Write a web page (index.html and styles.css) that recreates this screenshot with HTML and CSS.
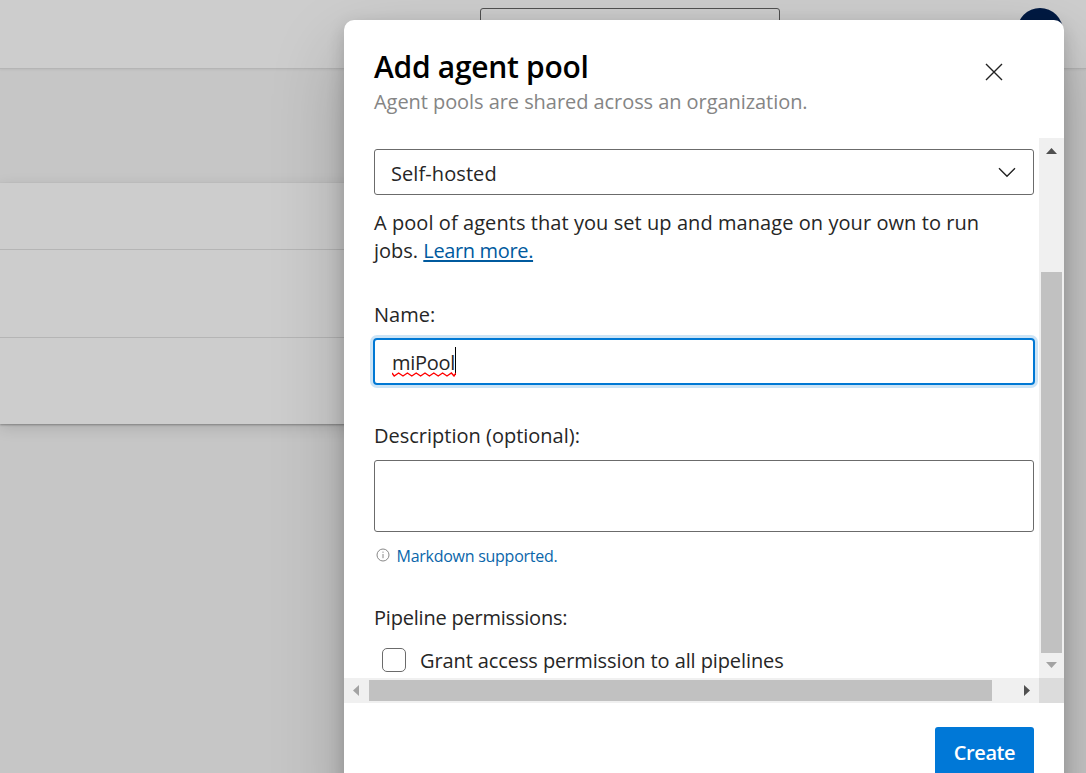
FILE: index.html
```html
<!DOCTYPE html>
<html lang="en">
<head>
<meta charset="utf-8">
<title>Add agent pool</title>
<link rel="stylesheet" href="styles.css">
</head>
<body>
<div class="page">
  <header class="topbar"><div class="search"></div><div class="avatar"></div></header>
  <div class="band"></div>
  <main class="card">
    <div class="row row-first"></div>
    <div class="row row-second"></div>
    <div class="row row-last"></div>
  </main>
</div>
<section class="dialog" role="dialog" aria-labelledby="title">
  <header class="dialog-head">
    <div>
      <h1 class="title" id="title">Add agent pool</h1>
      <p class="subtitle">Agent pools are shared across an organization.</p>
    </div>
    <svg class="close" width="18" height="18" viewBox="0 0 18 18"><path d="M1 1 17 17M17 1 1 17"/></svg>
  </header>
  <div class="scroller">
    <div class="viewport">
      <div class="select"><span class="select-text">Self-hosted</span>
        <svg class="chevron" width="18" height="11" viewBox="0 0 18 11"><path d="M1 1.3 9 9.3 17 1.3"/></svg>
      </div>
      <p class="help"><span class="help-first">A pool of agents that you set up and manage on your own to run</span><br><span class="help-jobs">jobs. </span><a class="link">Learn more.</a></p>
      <div class="label name-label">Name:</div>
      <div class="input"><span class="value">miPool<svg class="squiggle" width="64" height="5" viewBox="0 0 64 5"><path d="M0 1 2.2 4 6.6 1 11 4 15.4 1 19.8 4 24.2 1 28.6 4 33 1 37.4 4 41.8 1 46.2 4 50.6 1 55 4 59.4 1 62 4 64 1"/></svg></span><span class="caret"></span></div>
      <div class="label desc-label">Description (optional):</div>
      <div class="textarea"></div>
      <div class="hint">
        <svg class="info" width="14" height="14" viewBox="0 0 14 14"><circle cx="7" cy="7" r="6"/><path d="M7 6v4.2M7 3.6v1.2"/></svg>
        <span class="hint-text">Markdown supported.</span>
      </div>
      <div class="label perm-label">Pipeline permissions:</div>
      <div class="check"><span class="box"></span><span class="check-text">Grant access permission to all pipelines</span></div>
    </div>
    <div class="vbar">
      <svg class="arrow" width="25" height="25" viewBox="0 0 25 25"><path class="on" d="M7 16 12.5 10 18 16z"/></svg>
      <div class="vtrack"><div class="vthumb"></div></div>
      <svg class="arrow" width="25" height="25" viewBox="0 0 25 25"><path class="off" d="M7 9H18L12.5 15z"/></svg>
    </div>
    <div class="hbar">
      <svg class="arrow" width="25" height="25" viewBox="0 0 25 25"><path class="off" d="M15 7V18L9 12.5z"/></svg>
      <div class="htrack"><div class="hthumb"></div></div>
      <svg class="arrow" width="25" height="25" viewBox="0 0 25 25"><path class="on" d="M10 7V18L16 12.5z"/></svg>
    </div>
    <div class="corner"></div>
  </div>
  <footer class="dialog-foot"><div class="button"><span class="button-text">Create</span></div></footer>
</section>
</body>
</html>
```
FILE: styles.css
```css
* { box-sizing: border-box; }
body { margin: 0; width: 1086px; height: 773px; overflow: hidden; background: #c6c6c6; color: #262626; font: 20px/28px "Open Sans", "Noto Sans", sans-serif; }
h1, p { margin: 0; }
svg { display: block; flex: none; }
.page { height: 773px; overflow: hidden; }
.topbar { height: 69px; background: #cdcdcd; border-bottom: 1px solid #b5b5b5; box-shadow: 0 1px 2px rgba(0,0,0,.06); display: flex; align-items: flex-start; padding: 8px 23px 0 480px; justify-content: space-between; }
.search { width: 300px; height: 40px; border: 1px solid #505050; border-radius: 3px; }
.avatar { width: 46px; height: 46px; border-radius: 50%; background: #001a43; }
.band { height: 114px; }
.card { width: 1030px; background: #cdcdcd; box-shadow: 0 1px 2px rgba(0,0,0,.3), 0 4px 14px rgba(0,0,0,.13); }
.row { border-bottom: 1px solid #b5b5b5; }
.row-first { height: 67px; }
.row-second { height: 88px; }
.row-last { height: 86px; border: 0; }
.dialog { position: absolute; left: 344px; top: 20px; width: 720px; height: 790px; background: #fff; border-radius: 10px; overflow: hidden; box-shadow: 0 32px 72px rgba(0,0,0,.22), 0 6px 18px rgba(0,0,0,.18); }
.dialog-head { height: 118px; padding: 28px 61px 0 30px; display: flex; justify-content: space-between; }
.title { font-size: 30px; line-height: 38px; font-weight: 600; letter-spacing: -.3px; color: #000; white-space: nowrap; }
.subtitle { color: #858585; line-height: 28px; padding-top: 2px; white-space: nowrap; letter-spacing: -.06px; }
.close { margin-top: 15px; fill: none; stroke: #222; stroke-width: 1.4; }
.scroller { height: 565px; display: grid; grid-template: 540px 25px / 695px 25px; }
.viewport { padding: 11px 4px 0 30px; overflow: hidden; white-space: nowrap; }
.select { width: 660px; height: 46px; border: 1px solid #6b6b6b; border-radius: 3px; padding: 3px 17px 0 16px; display: flex; align-items: center; justify-content: space-between; }
.select-text { letter-spacing: .08px; }
.chevron { margin-top: -3px; fill: none; stroke: #222; stroke-width: 1.4; }
.help { margin-top: 14px; }
.help-first { letter-spacing: .065px; }
.link { color: #005a9e; letter-spacing: -.35px; text-decoration: underline; text-decoration-thickness: 2px; text-underline-offset: 2px; }
.name-label { margin-top: 36px; }
.input { width: 662px; height: 47px; margin: 9px 0 0 -1px; border: 2px solid #0078d4; border-radius: 4px; box-shadow: 0 0 0 3px #cce4f6; padding: 3px 0 0 17px; display: flex; align-items: center; }
.value { position: relative; letter-spacing: -.3px; }
.squiggle { position: absolute; left: 0; bottom: 0; fill: none; stroke: #f00; stroke-width: 1.4; }
.caret { width: 1px; height: 28px; background: #000; margin-top: -4px; }
.desc-label { margin-top: 37px; }
.textarea { width: 660px; height: 72px; margin-top: 10px; border: 1px solid #6b6b6b; border-radius: 3px; }
.hint { display: flex; align-items: center; gap: 7px; padding-left: 1.5px; height: 28px; margin-top: 10px; font-size: 16px; letter-spacing: -.26px; color: #0a66aa; }
.info { margin-top: -3px; fill: none; stroke: #888; stroke-width: 1; }
.perm-label { margin-top: 34px; letter-spacing: -.21px; }
.check { display: flex; align-items: center; gap: 14px; padding-left: 8px; height: 30px; margin-top: 13px; }
.check-text { padding-top: 2px; letter-spacing: -.1px; }
.box { width: 24px; height: 24px; border: 1px solid #6b6b6b; border-radius: 5px; }
.vbar { background: #f0f0f0; display: flex; flex-direction: column; }
.vtrack { flex: 1; padding: 109px 2px 0; }
.vthumb { height: 381px; background: #c1c1c1; }
.hbar { background: #f0f0f0; display: flex; }
.htrack { flex: 1; padding: 2px 0; }
.hthumb { width: 623px; height: 21px; background: #c1c1c1; }
.corner { background: #dcdcdc; }
.on { fill: #505050; }
.off { fill: #a3a3a3; }
.dialog-foot { display: flex; justify-content: flex-end; padding: 24px 30px 0 0; }
.button { width: 99px; height: 50px; border-radius: 3px; background: #0078d7; color: #fff; font-weight: 600; letter-spacing: -.4px; padding-top: 2px; display: flex; justify-content: center; align-items: center; }
```
